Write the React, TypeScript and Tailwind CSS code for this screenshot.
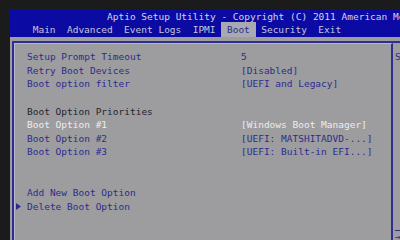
const tabs = ['Main', 'Advanced', 'Event Logs', 'IPMI', 'Boot', 'Security', 'Exit']

type Row = { label?: string; value?: string; tone?: 'item' | 'plain' | 'active'; sub?: boolean }

const rows: Row[] = [
  { label: 'Setup Prompt Timeout', value: '5' },
  { label: 'Retry Boot Devices', value: '[Disabled]' },
  { label: 'Boot option filter', value: '[UEFI and Legacy]' },
  {},
  { label: 'Boot Option Priorities', tone: 'plain' },
  { label: 'Boot Option #1', value: '[Windows Boot Manager]', tone: 'active' },
  { label: 'Boot Option #2', value: '[UEFI: MATSHITADVD-...]' },
  { label: 'Boot Option #3', value: '[UEFI: Built-in EFI...]' },
  {},
  {},
  { label: 'Add New Boot Option' },
  { label: 'Delete Boot Option', sub: true },
]

export default function App() {
  return (
    <div className="w-[400px] h-[240px] overflow-hidden bg-[#1b1b1b] pt-[10px] pl-[10px] flex flex-col font-['DejaVu_Sans_Mono',monospace] text-[9.5px] whitespace-nowrap">
      {/* title bar + tabs */}
      <div className="h-[27px] bg-[#0b0ba3] flex flex-col shrink-0">
        <div className="h-[11px] leading-[11px] mt-[1px] pl-[97px] text-[#d4d4e6]">
          Aptio Setup Utility - Copyright (C) 2011 American Megatrends, Inc.
        </div>
        <div className="flex mt-auto h-[16px] pl-[17px]">
          {tabs.map(t => (
            <span
              key={t}
              className={
                t === 'Boot'
                  ? 'px-[5.7px] leading-[16px] bg-[#a9a9b1] text-[#2c2c8e]'
                  : 'px-[5.7px] leading-[16px] text-[#c6c6d8]'
              }
            >
              {t}
            </span>
          ))}
        </div>
      </div>

      {/* body */}
      <div className="flex-1 bg-[#9d9d9f] pt-[4px] pl-[2px] flex">
        <div className="flex-1 flex border-t-2 border-l-2 border-[#2d2d93]">
          <div className="w-[379px] shrink-0 border-l border-t border-[#b6b6c6] border-r-2 border-r-[#2d2d93] pt-[6px] pl-[1px]">
            {rows.map((r, i) => (
              <div key={i} className="flex h-[13.64px] leading-[13.64px]">
                <span className="w-[11px] flex items-center">
                  {r.sub && (
                    <svg width="5" height="7" viewBox="0 0 5 7">
                      <path d="M0 0 L5 3.5 L0 7 Z" fill="#2c2c8e" />
                    </svg>
                  )}
                </span>
                <span
                  className={
                    'w-[214px] ' +
                    (r.tone === 'plain'
                      ? 'text-[#242430]'
                      : r.tone === 'active'
                        ? 'text-[#ececf2]'
                        : 'text-[#2c2c8e]')
                  }
                >
                  {r.label}
                </span>
                <span className={r.tone === 'active' ? 'text-[#ececf2]' : 'text-[#2c2c8e]'}>{r.value}</span>
              </div>
            ))}
          </div>

          {/* help panel, mostly cut off */}
          <div className="flex-1 flex flex-col pt-[7px] pl-[2px] text-[#2c2c8e] overflow-hidden">
            <div className="h-[13.64px] leading-[13.64px]">Select the keyboard NumLock state</div>
            <div className="mt-auto border-t border-[#2c2c8e] h-[10px] leading-[12px]">→←: Select Screen</div>
          </div>
        </div>
      </div>
    </div>
  )
}
